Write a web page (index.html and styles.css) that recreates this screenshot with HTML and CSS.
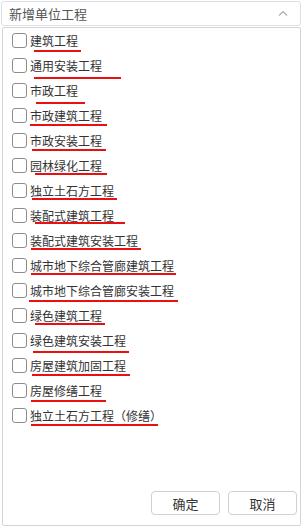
FILE: index.html
```html
<!DOCTYPE html>
<html lang="zh-CN">
<head>
    <meta charset="UTF-8">
    <meta name="viewport" content="width=device-width, initial-scale=1.0">
    <title>新增单位工程</title>
    <link rel="stylesheet" href="styles.css">
</head>
<body>
    <div class="select">
        <span class="select-text">新增单位工程</span>
        <svg class="arrow" width="10" height="6" viewBox="0 0 10 6"><path d="M1 5.5 L5 1.5 L9 5.5" fill="none" stroke="#a8abb2" stroke-width="1.1"/></svg>
    </div>

    <div class="panel">
        <ul class="list">
            <li><span class="box"></span><span class="label">建筑工程</span><i class="mark" style="left:31px;width:47px;top:22px"></i></li>
            <li><span class="box"></span><span class="label">通用安装工程</span><i class="mark" style="left:31px;width:87px;top:24px"></i></li>
            <li><span class="box"></span><span class="label">市政工程</span><i class="mark" style="left:33px;width:49px;top:24px"></i></li>
            <li><span class="box"></span><span class="label">市政建筑工程</span><i class="mark" style="left:27px;width:77px;top:21px"></i></li>
            <li><span class="box"></span><span class="label">市政安装工程</span><i class="mark" style="left:29px;width:74px;top:21px"></i></li>
            <li><span class="box"></span><span class="label">园林绿化工程</span><i class="mark" style="left:32px;width:72px;top:20px"></i></li>
            <li><span class="box"></span><span class="label">独立土石方工程</span><i class="mark" style="left:29px;width:85px;top:20px"></i></li>
            <li><span class="box"></span><span class="label">装配式建筑工程</span><i class="mark" style="left:32px;width:90px;top:19px"></i></li>
            <li><span class="box"></span><span class="label">装配式建筑安装工程</span><i class="mark" style="left:28px;width:110px;top:20px"></i></li>
            <li><span class="box"></span><span class="label">城市地下综合管廊建筑工程</span><i class="mark" style="left:28px;width:145px;top:20px"></i></li>
            <li><span class="box"></span><span class="label">城市地下综合管廊安装工程</span><i class="mark" style="left:26px;width:149px;top:22px"></i></li>
            <li><span class="box"></span><span class="label">绿色建筑工程</span><i class="mark" style="left:32px;width:70px;top:20px"></i></li>
            <li><span class="box"></span><span class="label">绿色建筑安装工程</span><i class="mark" style="left:30px;width:96px;top:23px"></i></li>
            <li><span class="box"></span><span class="label">房屋建筑加固工程</span><i class="mark" style="left:29px;width:98px;top:21px"></i></li>
            <li><span class="box"></span><span class="label">房屋修缮工程</span><i class="mark" style="left:28px;width:75px;top:22px"></i></li>
            <li><span class="box"></span><span class="label">独立土石方工程（修缮）</span><i class="mark" style="left:28px;width:127px;top:21px"></i></li>
        </ul>
        <div class="footer">
            <button class="btn">确定</button>
            <button class="btn">取消</button>
        </div>
    </div>
</body>
</html>
```

FILE: styles.css
```css
/* Reset */
* {
    margin: 0;
    padding: 0;
    box-sizing: border-box;
}

body {
    background-color: #fff;
    font-family: "Noto Sans CJK SC", "Liberation Sans", sans-serif;
    font-size: 12px;
    color: #333;
    padding: 1px 1px 0 1px;
    height: 526px;
    overflow: hidden;
}

/* Select box */
.select {
    height: 25px;
    width: 300px;
    border: 1px solid #dcdfe6;
    border-radius: 3px;
    display: flex;
    align-items: center;
    justify-content: space-between;
    padding: 0 12px 0 7px;
}

.select-text {
    font-size: 13px;
    color: #555;
}

.arrow {
    margin-bottom: 1px;
}

/* Dropdown panel */
.panel {
    margin: 1px 0 0 1px;
    width: 299px;
    height: 499px;
    border: 1px solid #d4d4d4;
    border-radius: 2px;
    display: flex;
    flex-direction: column;
}

.list {
    list-style: none;
    flex: 1;
}

.list li {
    position: relative;
    height: 25px;
    display: flex;
    align-items: center;
    padding-left: 9px;
}

.box {
    width: 15px;
    height: 15px;
    border: 1px solid #8c8c8c;
    border-radius: 3px;
    background: #fff;
    margin-right: 3px;
}

.label {
    line-height: 16px;
    color: #333;
}

/* spell-check style red lines */
.mark {
    position: absolute;
    height: 1.5px;
    background: #e81010;
}

/* Footer buttons */
.footer {
    display: flex;
    justify-content: flex-end;
    gap: 8px;
    padding: 0 3px 10px 0;
}

.btn {
    width: 69px;
    height: 24px;
    background: #fff;
    border: 1px solid #d0d0d0;
    border-radius: 4px;
    font-family: "Noto Sans CJK SC", "Liberation Sans", sans-serif;
    font-size: 13px;
    color: #333;
    cursor: pointer;
}
```
